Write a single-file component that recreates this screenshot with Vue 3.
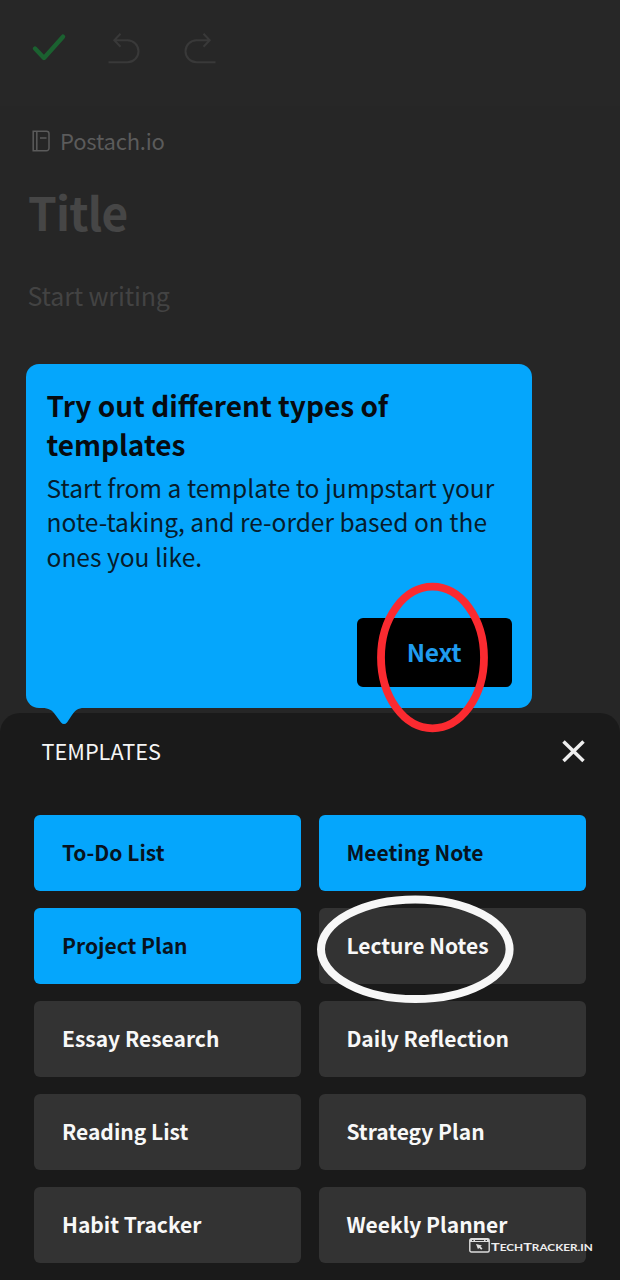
<script setup>
const templates = [
  { name: 'To-Do List', on: true },
  { name: 'Meeting Note', on: true },
  { name: 'Project Plan', on: true },
  { name: 'Lecture Notes', circled: true },
  { name: 'Essay Research' },
  { name: 'Daily Reflection' },
  { name: 'Reading List' },
  { name: 'Strategy Plan' },
  { name: 'Habit Tracker' },
  { name: 'Weekly Planner' },
]
</script>

<template>
  <main class="screen">
    <header class="toolbar">
      <svg class="tool" width="36" height="34" viewBox="0 0 36 34"><path d="M4 17.500 13 27 32 5.700" fill="none" stroke="#1b6130" stroke-width="4.400" stroke-linecap="round" stroke-linejoin="round" /></svg>
      <svg class="tool" width="36" height="36" viewBox="0 0 36 36" fill="none" stroke="#393939" stroke-width="2"><path d="M13.500 2.800 7.300 9.300l6.200 6.500M7.300 9.300H20.500a11 11 0 0 1 0 22H1.500" /></svg>
      <svg class="tool" width="36" height="36" viewBox="0 0 36 36" fill="none" stroke="#393939" stroke-width="2"><path d="M20.500 2.800 26.700 9.300 20.500 15.800M26.700 9.300H13.500a11 11 0 0 0 0 22H32.500" /></svg>
    </header>

    <section class="editor">
      <div class="notebook">
        <svg width="20" height="24" viewBox="0 0 20 24" fill="none" stroke="#5b5b5b" stroke-width="1.500"><path d="M2.200 2.200H15.500a2.500 2.500 0 0 1 2.500 2.500v14.600A2.500 2.500 0 0 1 15.500 21.800H2.200ZM5.800 2.200v19.600M9 9h6.500" /></svg>
        <span>Postach.io</span>
      </div>
      <h1 class="title"><span>Title</span></h1>
      <p class="hint"><span>Start writing</span></p>
    </section>

    <aside class="coach">
      <h2><span>Try out different types of</span><br /><span>templates</span></h2>
      <p><span>Start from a template to jumpstart your</span><br /><span>note-taking, and re-order based on the</span><br /><span>ones you like.</span></p>
      <button class="next"><span>Next</span></button>
      <svg class="tail" width="42" height="18" viewBox="0 0 42 18"><path d="M0 0V1C7 1 10 3 13.500 8L19 15.500Q22 18.500 25 15.500L30 8C33 3.500 36 1 42 1V0Z" fill="#05a6fc" /></svg>
      <svg class="ring" width="114" height="152" viewBox="0 0 114 152"><ellipse cx="57.500" cy="76.500" rx="51.500" ry="70.800" fill="none" stroke="#fb2a30" stroke-width="7.800" /></svg>
    </aside>

    <section class="sheet">
      <div class="bar">
        <span class="label">TEMPLATES</span>
        <svg width="24" height="24" viewBox="0 0 24 24"><path d="M2.500 2.500 22.500 22M22.500 2.500 2.500 22" stroke="#eee" stroke-width="3.500" /></svg>
      </div>
      <div class="grid">
        <div v-for="t in templates" :key="t.name" class="card" :class="{ on: t.on }">
          <span>{{ t.name }}</span>
          <svg v-if="t.circled" class="oval" width="200" height="110" viewBox="0 0 200 110"><ellipse cx="100.300" cy="55.300" rx="94.300" ry="49.800" fill="none" stroke="#f7f7f7" stroke-width="8" /></svg>
        </div>
      </div>
      <div class="mark">
        <svg width="21" height="15" viewBox="0 0 21 15"><rect x=".8" y=".8" width="19.400" height="13.200" rx="1.500" fill="none" stroke="#ddd" stroke-width="1.400" /><path d="M1 1h19v3H1Z" fill="#ddd" /><path d="M3 2.500h1.500M6 2.500h9M16.500 2.500H18" stroke="#333" /><path d="M7 6l6 1.500-1.500 1 2 2-1.300 1.300-2-2-1.200 1.500Z" fill="#ddd" /></svg>
        <span class="brand">T<i>ECH</i>T<i>RACKER.IN</i></span>
      </div>
    </section>
  </main>
</template>

<style>
body { margin: 0; background: #262626; }
</style>

<style scoped>
.screen {
  position: relative;
  width: 620px;
  height: 1280px;
  overflow: hidden;
  display: flex;
  flex-direction: column;
  background: #262626;
  font-family: "Noto Sans CJK SC", "Noto Sans", sans-serif;
}
.toolbar {
  box-sizing: border-box;
  height: 106px;
  flex: none;
  display: flex;
  align-items: flex-start;
  gap: 40px;
  padding: 31px 0 0 31px;
  background: #272727;
}
.editor { height: 607px; flex: none; }
.notebook { display: flex; align-items: center; gap: 9px; height: 40px; padding: 15px 0 0 31px; color: #5b5b5b; font-size: 22px; line-height: 40px; letter-spacing: -0.200px; }
.notebook span { margin-top: -2px; }
.title { margin: 18px 0 0 28px; font-size: 46px; line-height: 64px; color: #464646; font-weight: 700; letter-spacing: -0.800px; }
.hint { margin: 32px 0 0 27.500px; font-size: 25px; line-height: 40px; color: #434343; letter-spacing: -0.150px; }
.coach {
  position: absolute;
  z-index: 2;
  left: 26px;
  top: 364px;
  width: 506px;
  height: 344px;
  box-sizing: border-box;
  padding: 22px 20.500px 21px 20.500px;
  border-radius: 13px;
  background: #05a6fc;
  color: #070b10;
  display: flex;
  flex-direction: column;
}
.coach h2 { margin: 0; font-size: 28px; line-height: 38.500px; font-weight: 700; white-space: nowrap; }
.coach p { margin: 8px 0 0; font-size: 24.550px; line-height: 34.400px; white-space: nowrap; color: #071c2c; }
.next { margin: auto 0 0; align-self: flex-end; width: 155px; height: 69px; padding: 0 0 2px; border: 0; border-radius: 6px; background: #000; color: #1f9cf0; font: 700 24.500px/67px "Noto Sans CJK SC", sans-serif; letter-spacing: -0.200px; }
.tail { position: absolute; left: 16px; top: 343px; }
.ring { position: absolute; left: 349px; top: 217px; }
.sheet { position: relative; flex: 1; border-radius: 20px 20px 0 0; background: #1a1a1a; }
.bar { display: flex; align-items: center; justify-content: space-between; height: 75px; padding: 0 35px 0 41.500px; color: #f5f5f5; font-size: 21.700px; }
.grid { display: grid; grid-template-columns: 267px 267px; grid-auto-rows: 76px; gap: 17px 17.400px; padding: 27px 0 0 34.400px; }
.card { position: relative; display: flex; align-items: center; box-sizing: border-box; padding: 0 0 3px 27.600px; border-radius: 6px; background: #333; color: #f8f8f8; font-size: 21px; font-weight: 600; }
.card.on { background: #05a6fc; color: #08131e; }
.oval { position: absolute; z-index: 1; left: -4px; top: -14px; }
.mark { position: absolute; left: 469px; top: 525px; display: flex; align-items: center; height: 15px; color: #eee; }
.brand { margin: 2px 0 0 1px; font: 700 11px/15px Lato, sans-serif; white-space: nowrap; transform: scaleX(1.310); transform-origin: 0 50%; }
.brand i { font-size: 9px; font-style: normal; }
</style>
